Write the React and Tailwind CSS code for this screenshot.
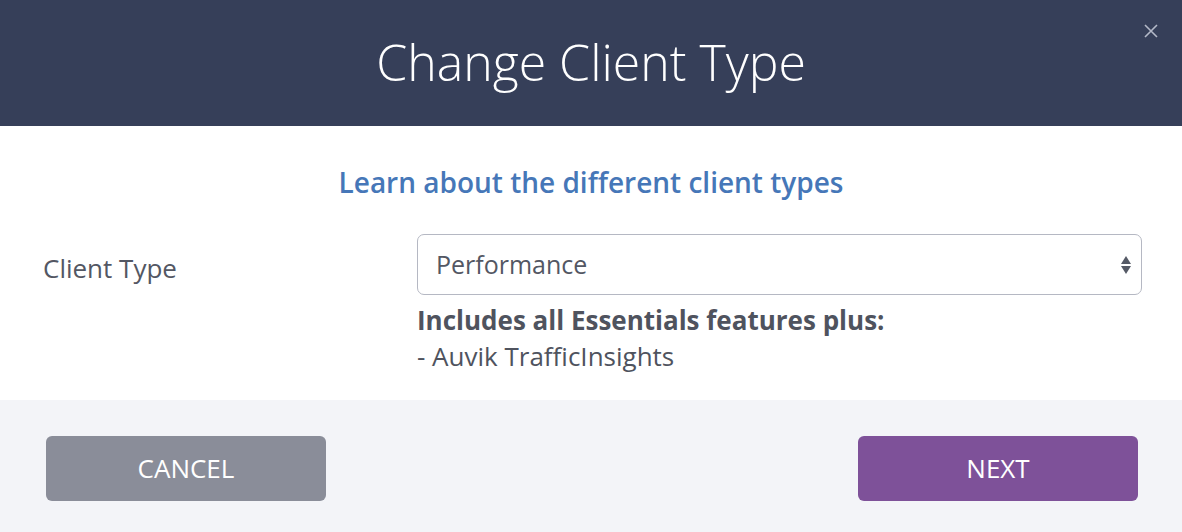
export default function App() {
  return (
    <div className="w-[1182px] h-[532px] flex flex-col bg-white" style={{ fontFamily: '"Open Sans", "Liberation Sans", sans-serif' }}>
      <div className="relative h-[126px] bg-[#363f59] flex items-center justify-center">
        <h1 className="text-[50px] font-light text-white -mt-[2px]">Change Client Type</h1>
        <button className="absolute right-[23px] top-[23px] w-[16px] h-[16px] flex items-center justify-center">
          <svg width="14" height="14" viewBox="0 0 14 14" fill="none" stroke="#b4b9c8" strokeWidth="1.6">
            <path d="M1 1L13 13M13 1L1 13" />
          </svg>
        </button>
      </div>
      <div className="h-[274px] flex flex-col">
        <div className="pt-[38px] flex justify-center">
          <a className="text-[28px] font-semibold text-[#4677b8] leading-[36px]">Learn about the different client types</a>
        </div>
        <div className="mt-[34px] flex pl-[43px] pr-[40px]">
          <div className="w-[374px] pt-[19px] text-[26px] text-[#535763] leading-[30px]">Client Type</div>
          <div className="flex-1 flex flex-col">
            <div className="h-[61px] rounded-[7px] border-[1.5px] border-[#b5b8c3] flex items-center justify-between pl-[18px] pr-[9px]">
              <span className="text-[25px] text-[#535763]">Performance</span>
              <svg width="12" height="24" viewBox="0 0 12 24" fill="#555a66">
                <path d="M6 3L11 11H1Z" />
                <path d="M6 21L11 13H1Z" />
              </svg>
            </div>
            <div className="mt-[7px] text-[26px] font-bold text-[#4f535e] leading-[36px]">Includes all Essentials features plus:</div>
            <div className="text-[26px] text-[#4f535e] leading-[36px]">- Auvik TrafficInsights</div>
          </div>
        </div>
      </div>
      <div className="flex-1 bg-[#f3f4f8] flex items-start justify-between pl-[46px] pr-[44px] pt-[36px]">
        <button className="w-[280px] h-[65px] rounded-[6px] bg-[#8a8d99] text-white text-[26px] flex items-center justify-center">CANCEL</button>
        <button className="w-[280px] h-[65px] rounded-[6px] bg-[#7e5199] text-white text-[26px] flex items-center justify-center">NEXT</button>
      </div>
    </div>
  );
}
